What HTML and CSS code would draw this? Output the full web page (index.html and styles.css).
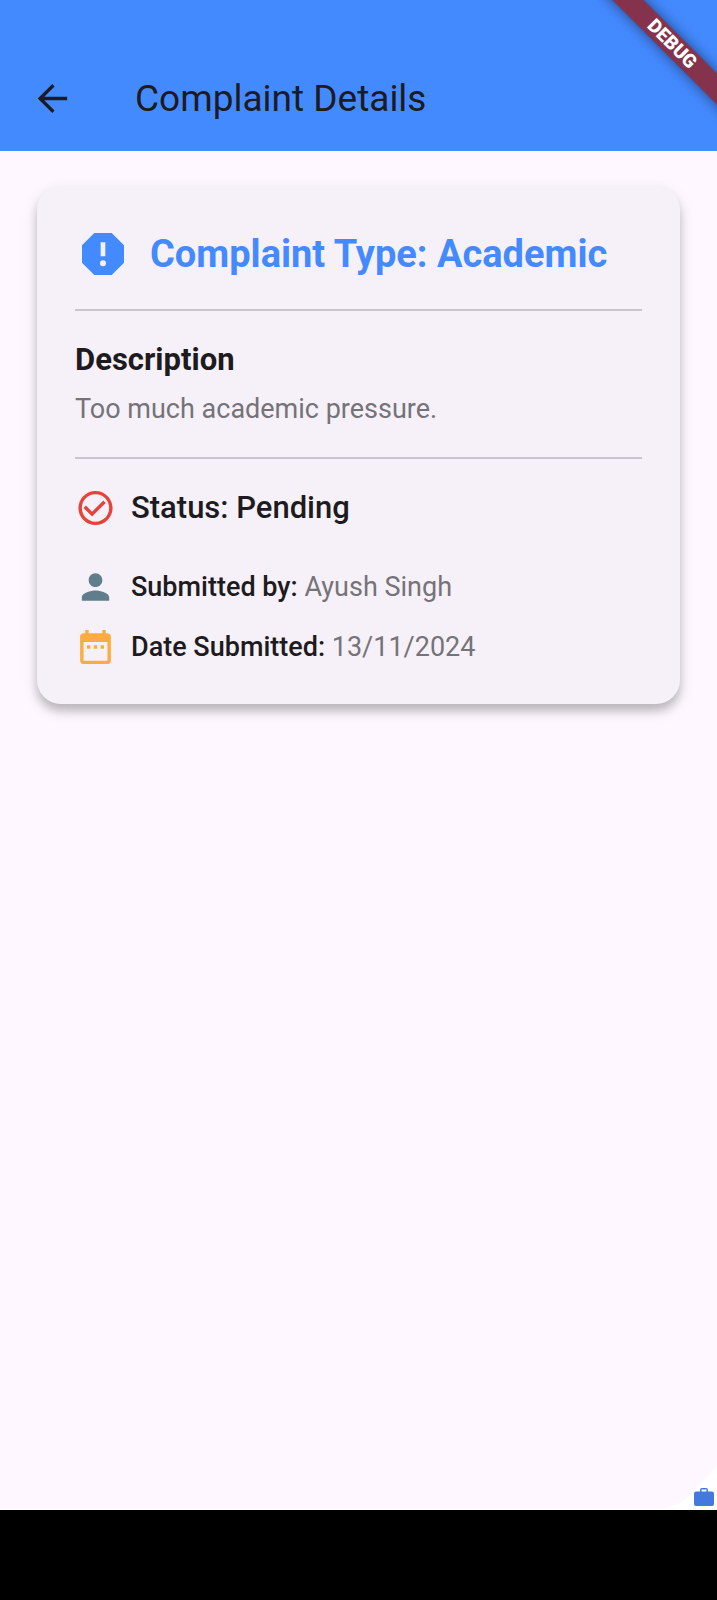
FILE: index.html
```html
<!DOCTYPE html>
<html lang="en">
<head>
<meta charset="utf-8">
<meta name="viewport" content="width=device-width, initial-scale=1">
<title>Complaint Details</title>
<link rel="stylesheet" href="styles.css">
</head>
<body>
<header class="app-bar">
  <button class="back" type="button" aria-label="Back">
    <svg class="icon-back" viewBox="0 0 24 24" aria-hidden="true"><path d="M19.800 11.100H7.600l5.500-5.500L11.900 4.300 4.100 12l7.800 7.700 1.200-1.300-5.500-5.500h12.200z"/></svg>
  </button>
  <h1 class="app-title">Complaint Details</h1>
  <div class="ribbon">DEBUG</div>
</header>
<main class="content">
  <article class="card">
    <div class="type-row">
      <svg class="icon-type" viewBox="0 0 24 24" aria-hidden="true"><path fill-rule="evenodd" d="M15.73 3H8.27L3 8.27v7.46L8.27 21h7.46L21 15.73V8.27L15.73 3zM12 17.3a1.3 1.3 0 1 1 0-2.6 1.3 1.3 0 0 1 0 2.6zm1-4.3h-2V7h2v6z"/></svg>
      <h2 class="type-title">Complaint Type: Academic</h2>
    </div>
    <hr class="divider">
    <section class="description">
      <h3 class="description-title">Description</h3>
      <p class="description-text">Too much academic pressure.</p>
    </section>
    <hr class="divider">
    <div class="row status-row">
      <svg class="icon-row icon-status" viewBox="0 0 24 24" aria-hidden="true"><path d="M16.59 7.58L10 14.17l-3.59-3.58L5 12l5 5 8-8zM12 2C6.48 2 2 6.48 2 12s4.48 10 10 10 10-4.48 10-10S17.52 2 12 2zm0 18c-4.42 0-8-3.58-8-8s3.58-8 8-8 8 3.58 8 8-3.58 8-8 8z"/></svg>
      <p class="status-text">Status: Pending</p>
    </div>
    <div class="row">
      <svg class="icon-row icon-person" viewBox="0 0 24 24" aria-hidden="true"><path d="M12 12c2.21 0 4-1.79 4-4s-1.79-4-4-4-4 1.79-4 4 1.79 4 4 4zm0 2c-2.67 0-8 1.34-8 4v2h16v-2c0-2.66-5.33-4-8-4z"/></svg>
      <p class="meta"><span class="label">Submitted by:</span> Ayush Singh</p>
    </div>
    <div class="row">
      <svg class="icon-row icon-date" viewBox="0 0 24 24" aria-hidden="true"><path d="M9 11H7v2h2v-2zm4 0h-2v2h2v-2zm4 0h-2v2h2v-2zm2-7h-1V2h-2v2H8V2H6v2H5c-1.11 0-1.99.9-1.99 2L3 20c0 1.1.89 2 2 2h14c1.1 0 2-.9 2-2V6c0-1.1-.9-2-2-2zm0 16H5V9h14v11z"/></svg>
      <p class="meta"><span class="label">Date Submitted:</span> 13/11/2024</p>
    </div>
  </article>
  <svg class="corner" viewBox="0 0 50 48" aria-hidden="true">
    <path fill="#fff" d="M0 46C9 46 13 44 18 39L50 7V48H0z"/>
    <path fill="#4378df" d="M29 31.500h4v-1.500q0-2 2-2h4q2 0 2 2v1.500h4q2 0 2 2v10.500q0 2-2 2H29q-2 0-2-2V33.500q0-2 2-2zm5.500 0h5v-2h-5z" fill-rule="evenodd"/>
  </svg>
</main>
<footer class="nav-bar"></footer>
</body>
</html>
```
FILE: styles.css
```css
* {
  box-sizing: border-box;
}

body {
  margin: 0;
  min-height: 100vh;
  display: flex;
  flex-direction: column;
  background: #fef7ff;
  color: #1d1b20;
  font-family: Roboto, "Liberation Sans", sans-serif;
}

h1, h2, h3, p {
  margin: 0;
}

svg {
  display: block;
  flex: none;
}

.app-bar {
  position: relative;
  overflow: hidden;
  display: flex;
  align-items: center;
  gap: 60px;
  padding: 46px 30px 0;
  height: 151px;
  background: #448aff;
}

.back {
  padding: 0;
  border: 0;
  background: none;
  color: #1d1b20;
}

.icon-back {
  width: 45px;
  height: 45px;
  fill: currentColor;
}

.app-title {
  font-size: 37px;
  font-weight: 400;
  line-height: 48px;
}

.ribbon {
  position: absolute;
  top: 33px;
  right: -55px;
  width: 200px;
  height: 22px;
  transform: rotate(45deg);
  background: #85324c;
  box-shadow: 0 0 14px rgba(0, 0, 0, 0.5);
  color: #fff;
  font-size: 19px;
  font-weight: 900;
  line-height: 22px;
  text-align: center;
}

.content {
  position: relative;
  flex: 1;
  padding: 35px 37px;
  border-bottom: 2px solid #fff;
}

.card {
  padding: 38px 38px 36px;
  border-radius: 24px;
  background: #f6f1f9;
  box-shadow: 0 7px 8px rgba(0, 0, 0, 0.18), 0 6px 16px rgba(0, 0, 0, 0.12);
}

.type-row {
  display: flex;
  align-items: center;
  gap: 19px;
  min-height: 60px;
}

.icon-type {
  width: 56px;
  height: 56px;
  fill: #448aff;
}

.type-title {
  color: #448aff;
  font-size: 38px;
  font-weight: 700;
  line-height: 52px;
}

.divider {
  height: 2px;
  margin: 25px 0 28px;
  border: 0;
  background: #cac4d0;
}

.description {
  display: grid;
  gap: 10px;
  margin-bottom: 30px;
}

.description-title {
  font-size: 31px;
  font-weight: 700;
  line-height: 42px;
}

.description-text {
  color: #757378;
  font-size: 27px;
  line-height: 36px;
}

.row {
  display: flex;
  align-items: center;
  gap: 15px;
}

.row + .row {
  margin-top: 18px;
}

.status-row + .row {
  margin-top: 37px;
}

.icon-row {
  width: 41px;
  height: 42px;
}

.icon-status {
  fill: #e5443a;
}

.icon-person {
  fill: #607d8b;
}

.icon-date {
  fill: #ffab40;
}

.status-text {
  font-size: 31px;
  font-weight: 500;
  line-height: 42px;
}

.meta {
  color: #757378;
  font-size: 27px;
  line-height: 36px;
}

.label {
  color: #1d1b20;
  font-weight: 500;
}

.corner {
  position: absolute;
  right: 0;
  bottom: 0;
  width: 50px;
  height: 48px;
}

.nav-bar {
  height: 90px;
  background: #000;
}
```
